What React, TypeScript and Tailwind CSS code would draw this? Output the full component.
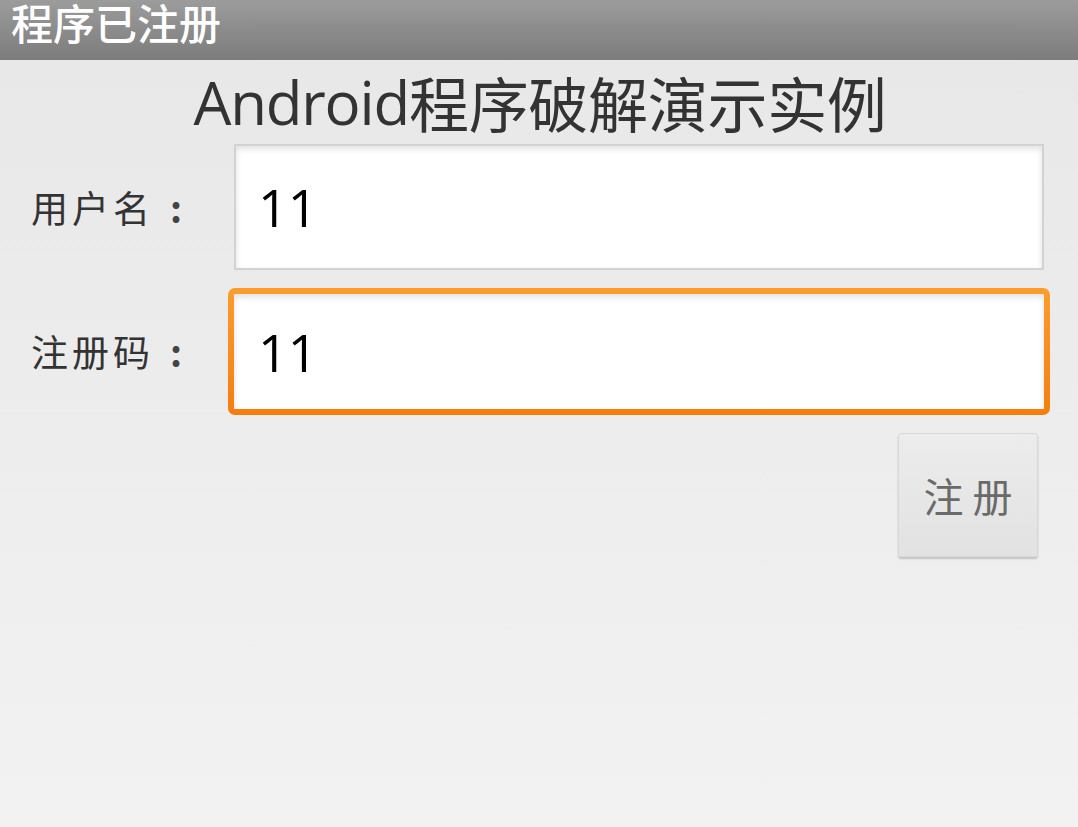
import React from "react";

const cjk = { fontFamily: '"Noto Sans CJK SC", "Noto Sans", sans-serif' };
const num = { fontFamily: '"Open Sans", "Noto Sans CJK SC", sans-serif' };

function Label({ text }: { text: string }) {
  return (
    <div className="flex items-center pl-[31px] text-[37px] text-[#333] leading-none">
      <span className="tracking-[4px]">{text}</span>
      <span className="ml-[16px] font-bold text-[#444]">:</span>
    </div>
  );
}

export default function App() {
  return (
    <div className="w-[1078px] h-[827px] flex flex-col overflow-hidden" style={cjk}>
      <div className="h-[60px] bg-gradient-to-b from-[#9c9c9c] to-[#7c7c7c] flex items-start pl-[11px] pt-[1px] shrink-0">
        <span className="text-white text-[42px] leading-[42px] font-medium">程序已注册</span>
      </div>
      <div className="flex-1 bg-gradient-to-b from-[#e8e8e8] to-[#f2f2f2] flex flex-col">
        <div className="h-[84px] flex items-center justify-center text-[60px] leading-none text-[#333] pl-[2px]">
          <span className="tracking-[-1.2px]" style={num}>Android</span>
          <span className="tracking-[-0.3px]" style={cjk}>程序破解演示实例</span>
        </div>
        <div className="flex items-center h-[126px]">
          <div className="w-[234px]"><Label text="用户名" /></div>
          <div className="w-[810px] h-[126px] bg-white border-2 border-[#d2d2d2] shadow-[inset_0_3px_6px_rgba(0,0,0,0.12)] flex items-center pl-[22px] text-[52px] text-black leading-none" style={num}>
            11
          </div>
        </div>
        <div className="flex items-center h-[127px] mt-[18px]">
          <div className="w-[228px]"><Label text="注册码" /></div>
          <div className="w-[822px] h-[127px] rounded-[7px] bg-gradient-to-b from-[#fb9d2c] to-[#f57d0c] p-[6px]">
            <div className="w-full h-full bg-white shadow-[inset_0_3px_6px_rgba(0,0,0,0.12)] flex items-center pl-[24px] text-[52px] text-black leading-none" style={num}>
              11
            </div>
          </div>
        </div>
        <div className="flex justify-end pr-[40px] mt-[18px]">
          <div className="w-[140px] h-[124px] rounded-[3px] bg-gradient-to-b from-[#ececec] to-[#e2e2e2] border border-[#d8d8d8] shadow-[0_2px_2px_rgba(0,0,0,0.18)] flex items-center justify-center text-[40px] text-[#6a6a6a] leading-none">
            注 册
          </div>
        </div>
      </div>
    </div>
  );
}
